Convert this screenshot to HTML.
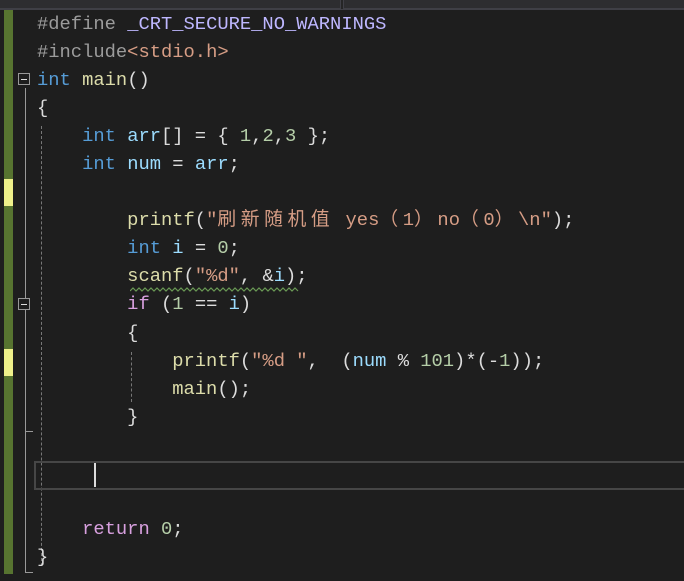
<!DOCTYPE html>
<html><head><meta charset="utf-8"><style>
html,body{margin:0;padding:0;width:684px;height:581px;overflow:hidden;background:#1e1e1e}
.top{position:absolute;left:0;top:0;width:684px;height:9px;background:#252526;border-bottom:1px solid #3f3f46}
.tab{position:absolute;top:0;height:8px;border:1px solid #3f3f46;border-top:none;background:#2d2d30}
.g{position:absolute;left:4px;width:9px;background:#577430}
.y{position:absolute;left:4px;width:9px;background:#eef08a}
.code{position:absolute;left:37px;top:10px;font-family:"Liberation Mono","Noto Sans CJK SC",monospace;font-size:18.8px;line-height:28.05px;color:#dcdcdc;white-space:pre}
.k{color:#569cd6}.p{color:#9b9b9b}.m{color:#beb7ff}.s{color:#d69d85}.f{color:#dcdcaa}.v{color:#9cdcfe}.n{color:#b5cea8}.c{color:#d8a0df}
.w{letter-spacing:4.6px}
.box{position:absolute;width:12px;height:12px;border:1px solid #999;background:#1e1e1e;box-sizing:border-box}
.box:after{content:"";position:absolute;left:2px;top:5px;width:6px;height:1px;background:#ddd}
</style></head><body>
<div class="top"></div>
<div class="tab" style="left:-1px;width:340px"></div>
<div class="tab" style="left:343px;width:345px"></div>
<div class="g" style="top:10px;height:169px"></div>
<div class="y" style="top:179px;height:27px"></div>
<div class="g" style="top:206px;height:143px"></div>
<div class="y" style="top:349px;height:27px"></div>
<div class="g" style="top:376px;height:198px"></div>
<div style="position:absolute;left:25px;top:88px;width:1px;height:485px;background:#999"></div>
<div style="position:absolute;left:25px;top:572px;width:8px;height:1px;background:#999"></div>
<div style="position:absolute;left:25px;top:431px;width:8px;height:1px;background:#999"></div>
<div class="box" style="left:18px;top:73px"></div>
<div class="box" style="left:18px;top:298px"></div>
<div style="position:absolute;left:41px;top:126px;width:0;height:440px;border-left:1px dashed #777"></div>
<div style="position:absolute;left:131px;top:352px;width:0;height:50px;border-left:1px dashed #777"></div>
<div style="position:absolute;left:34px;top:461px;width:660px;height:25px;border:2px solid #464646"></div>
<div style="position:absolute;left:94px;top:463px;width:2px;height:24px;background:#ddd"></div>
<svg style="position:absolute;left:130px;top:287px" width="172" height="6"><polyline fill="none" stroke="#6a9955" stroke-width="1.2" points="0,4 3,1 6,4 9,1 12,4 15,1 18,4 21,1 24,4 27,1 30,4 33,1 36,4 39,1 42,4 45,1 48,4 51,1 54,4 57,1 60,4 63,1 66,4 69,1 72,4 75,1 78,4 81,1 84,4 87,1 90,4 93,1 96,4 99,1 102,4 105,1 108,4 111,1 114,4 117,1 120,4 123,1 126,4 129,1 132,4 135,1 138,4 141,1 144,4 147,1 150,4 153,1 156,4 159,1 162,4 165,1 168,4"/></svg>
<div class="code"><span class="p">#define</span> <span class="m">_CRT_SECURE_NO_WARNINGS</span>
<span class="p">#include</span><span class="s">&lt;stdio.h&gt;</span>
<span class="k">int</span> <span class="f">main</span>()
{
    <span class="k">int</span> <span class="v">arr</span>[] = { <span class="n">1</span>,<span class="n">2</span>,<span class="n">3</span> };
    <span class="k">int</span> <span class="v">num</span> = <span class="v">arr</span>;

        <span class="f">printf</span>(<span class="s">"<span class="w">刷新随机值</span> yes<span class="w">（</span>1<span class="w">）</span>no<span class="w">（</span>0<span class="w">）</span>\n"</span>);
        <span class="k">int</span> <span class="v">i</span> = <span class="n">0</span>;
        <span class="f">scanf</span>(<span class="s">"%d"</span>, &amp;<span class="v">i</span>);
        <span class="c">if</span> (<span class="n">1</span> == <span class="v">i</span>)
        {
            <span class="f">printf</span>(<span class="s">"%d "</span>,  (<span class="v">num</span> % <span class="n">101</span>)*(-<span class="n">1</span>));
            <span class="f">main</span>();
        }



    <span class="c">return</span> <span class="n">0</span>;
}</div>
</body></html>
